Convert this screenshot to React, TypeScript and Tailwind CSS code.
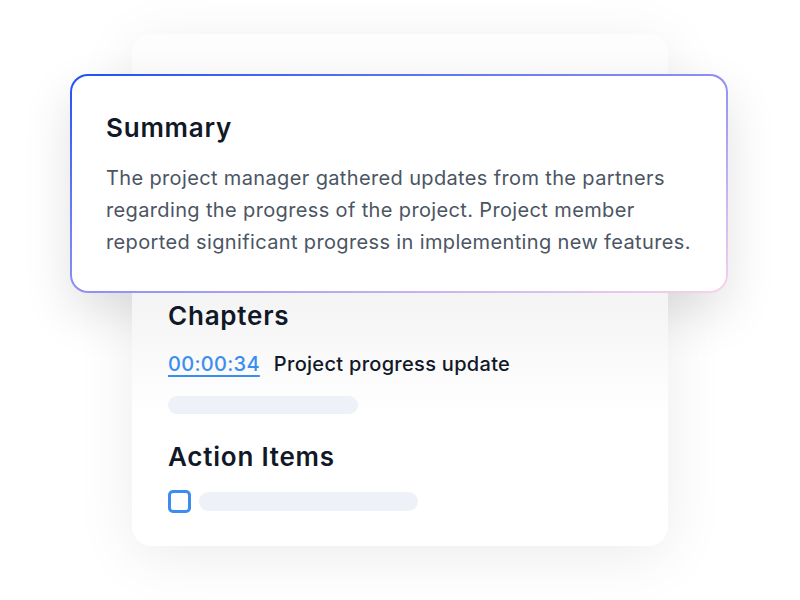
export default function App() {
  return (
    <div
      className="flex min-h-[600px] w-[800px] justify-center bg-white pt-[34px]"
      style={{ fontFamily: "Inter, 'Noto Sans', sans-serif" }}
    >
      <div className="flex h-[512px] w-[536px] flex-col rounded-[20px] bg-[#fdfdfd] pt-[40px] shadow-[0_10px_60px_rgba(0,0,0,0.08)]">
        <div className="-ml-[62px] -mr-[60px] rounded-[18px] bg-gradient-to-br from-[#1d4ff5] via-[#8f8ff2] to-[#f9d2ea] p-[2px] shadow-[0_20px_50px_rgba(0,0,0,0.12)]">
          <div className="rounded-[16px] bg-white pb-[33px] pl-[34px] pr-[24px] pt-[36px]">
            <h2 className="text-[26px] font-semibold leading-8 tracking-[0.03em] text-[#111827]">Summary</h2>
            <p className="mt-[18px] text-[20px] leading-8 tracking-[0.018em] text-[#4b5563]">
              The project manager gathered updates from the partners regarding the progress of the
              project. Project member reported significant progress in implementing new features.
            </p>
          </div>
        </div>
        <div className="flex flex-1 flex-col rounded-b-[20px] bg-gradient-to-b from-[#f4f4f5] to-white to-50% px-[36px]">
          <h3 className="mt-[7px] text-[26px] font-semibold leading-8 tracking-[0.03em] text-[#111827]">Chapters</h3>
          <div className="mt-[18px] flex items-center gap-[14px] text-[20px] font-medium leading-7 tracking-[0.015em]">
            <span className="text-[#3b8ef0] underline decoration-2 underline-offset-4">00:00:34</span>
            <span className="text-[#111827]">Project progress update</span>
          </div>
          <div className="mt-[18px] h-[18px] w-[190px] rounded-full bg-[#eef1f8]" />
          <h3 className="mt-[27px] text-[26px] font-semibold leading-8 tracking-[0.03em] text-[#111827]">Action Items</h3>
          <div className="mt-[17px] flex items-center gap-[8px]">
            <div className="h-[23px] w-[23px] rounded-[5px] border-[3px] border-[#3b8ef0]" />
            <div className="h-[19px] w-[219px] rounded-full bg-[#eef1f8]" />
          </div>
        </div>
      </div>
    </div>
  );
}
